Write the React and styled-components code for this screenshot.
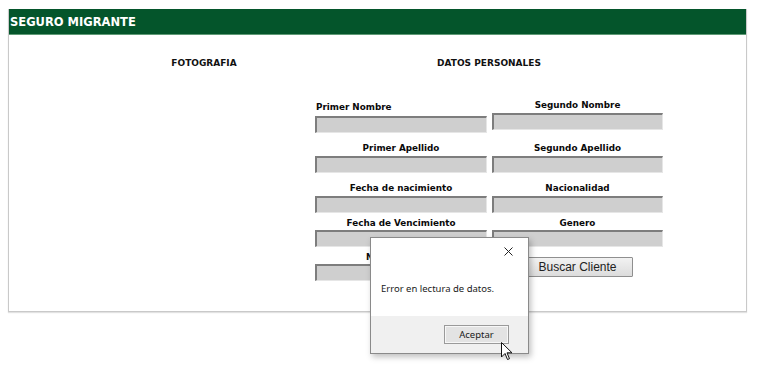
import React from 'react';
import styled, { createGlobalStyle } from 'styled-components';

const GlobalStyle = createGlobalStyle`
  html, body {
    height: 100%;
  }
  body {
    margin: 0;
    background: #ffffff;
    font-family: "DejaVu Sans", Verdana, sans-serif;
  }
`

const Page = styled.div`
  position: relative;
  height: 373px;
  padding: 8px;
  box-sizing: border-box;
`

const Panel = styled.div`
  width: 737px;
  height: 302px;
  border: 1px solid #c9c9c9;
  border-top: none;
  box-shadow: 0 1px 1px #e2e2e2;
`

const Header = styled.div`
  height: 25px;
  margin-top: 1px;
  background: #04552b;
  border-bottom: 1px solid #5f9a76;
  color: #ffffff;
  font-size: 11.5px;
  font-weight: bold;
  line-height: 26px;
  padding-left: 1px;
`

const Body = styled.div`
  display: grid;
  grid-template-columns: 306px 348px;
  padding-top: 22px;
`

const PhotoColumn = styled.div`
  padding-left: 84px;
`

const SectionTitle = styled.div`
  text-align: center;
  font-size: 9px;
  font-weight: bold;
  color: #111;
  line-height: 12px;
  height: 12px;
`

const Form = styled.div`
  display: grid;
  grid-template-columns: 172px 171px;
  column-gap: 5px;
  margin-top: 30px;
`

const Cell = styled.div`
  display: flex;
  flex-direction: column;
  margin-top: ${p => p.$top || 0}px;
`

const Label = styled.div`
  font-size: 8.8px;
  font-weight: bold;
  color: #0a0a0a;
  line-height: 13px;
  text-align: ${p => (p.$left ? 'left' : 'center')};
  padding-left: ${p => (p.$left ? 1 : 0)}px;
  margin-bottom: ${p => p.$gap ?? 1}px;
`

const Field = styled.div`
  box-sizing: border-box;
  width: 100%;
  height: 17px;
  background: #cfcfcf;
  border-top: 2px solid #7d7d7d;
  border-left: 2px solid #7d7d7d;
  border-right: 1px solid #e6e6e6;
  border-bottom: 1px solid #e6e6e6;
`

const ButtonCell = styled.div`
  display: flex;
  justify-content: center;
  align-items: flex-start;
  padding-top: 10px;
`

const SearchButton = styled.button`
  width: 111px;
  height: 20px;
  background: linear-gradient(#f2f2f2, #dcdcdc);
  border: 1px solid #8f8f8f;
  border-radius: 1px;
  font-family: "Liberation Sans", Arial, sans-serif;
  font-size: 12px;
  color: #222;
  padding: 0;
`

const Dialog = styled.div`
  position: absolute;
  left: 370px;
  top: 237px;
  width: 157px;
  height: 115px;
  background: #ffffff;
  border: 1px solid #8a8a8a;
  box-shadow: 2px 3px 6px rgba(0, 0, 0, 0.25);
  display: flex;
  flex-direction: column;
  font-family: "Noto Sans", "Open Sans", sans-serif;
`

const DialogTop = styled.div`
  flex: 1;
  display: flex;
  flex-direction: column;
  padding: 0 10px;
`

const CloseRow = styled.div`
  display: flex;
  justify-content: flex-end;
  padding-top: 9px;
  margin-right: 5px;
`

const Message = styled.div`
  font-size: 9.5px;
  color: #1a1a1a;
  margin-top: 26px;
`

const DialogFooter = styled.div`
  height: 37px;
  background: #f0f0f0;
  display: flex;
  justify-content: flex-end;
  align-items: center;
  padding-right: 19px;
`

const OkButton = styled.button`
  width: 65px;
  height: 19px;
  background: #e3e3e3;
  border: 1px solid #9a9a9a;
  box-shadow: inset 0 0 0 1px #f7f7f7;
  font-family: "Noto Sans", "Open Sans", sans-serif;
  font-size: 9.5px;
  color: #1a1a1a;
  padding: 0;
`

const Cursor = styled.svg`
  position: absolute;
  left: 501px;
  top: 342px;
`

const rows = [
  { left: 'Primer Nombre', right: 'Segundo Nombre', top: 0, leftAlign: true, leftOffset: 2 },
  { left: 'Primer Apellido', right: 'Segundo Apellido', top: 9 },
  { left: 'Fecha de nacimiento', right: 'Nacionalidad', top: 9 },
  { left: 'Fecha de Vencimiento', right: 'Genero', top: 4, gap: 0 },
]

function App() {
  return (
    <Page>
      <GlobalStyle />
      <Panel>
        <Header>SEGURO MIGRANTE</Header>
        <Body>
          <PhotoColumn>
            <SectionTitle>FOTOGRAFIA</SectionTitle>
          </PhotoColumn>
          <div>
            <SectionTitle>DATOS PERSONALES</SectionTitle>
            <Form>
              {rows.map((r) => (
                <React.Fragment key={r.left}>
                  <Cell $top={r.top + (r.leftOffset || 0)}>
                    <Label $left={r.leftAlign} $gap={r.leftAlign ? 2 : r.gap}>{r.left}</Label>
                    <Field />
                  </Cell>
                  <Cell $top={r.top}>
                    <Label $gap={r.gap}>{r.right}</Label>
                    <Field />
                  </Cell>
                </React.Fragment>
              ))}
              <Cell $top={4}>
                <Label $gap={0}>No. Pasaporte</Label>
                <Field />
              </Cell>
              <ButtonCell>
                <SearchButton type="button">Buscar Cliente</SearchButton>
              </ButtonCell>
            </Form>
          </div>
        </Body>
      </Panel>
      <Dialog>
        <DialogTop>
          <CloseRow>
            <svg width="9" height="9" viewBox="0 0 9 9">
              <path d="M0.5 0.5 L8.5 8.5 M8.5 0.5 L0.5 8.5" stroke="#222" strokeWidth="1" />
            </svg>
          </CloseRow>
          <Message>Error en lectura de datos.</Message>
        </DialogTop>
        <DialogFooter>
          <OkButton type="button">Aceptar</OkButton>
        </DialogFooter>
      </Dialog>
      <Cursor width="12" height="19" viewBox="0 0 12 19">
        <path d="M0.5 0.5 L0.5 15 L4 11.5 L6.5 17.5 L8.5 16.7 L6 10.8 L11 10.8 Z" fill="#ffffff" stroke="#111" strokeWidth="1" strokeLinejoin="round" />
      </Cursor>
    </Page>
  );
}

export default App;
